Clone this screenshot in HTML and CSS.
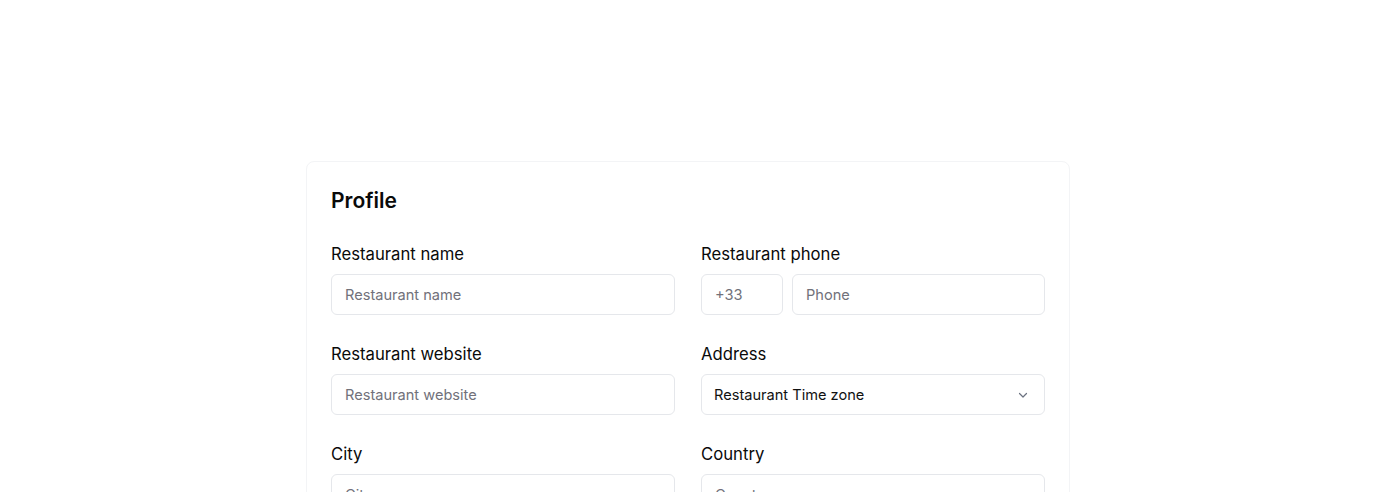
FILE: index.html
```html
<!DOCTYPE html>
<html lang="en">
<head>
<meta charset="utf-8">
<title>Profile</title>
<link rel="stylesheet" href="styles.css">
</head>
<body>
<main class="page">
  <section class="card">
    <h2 class="card-title">Profile</h2>
    <div class="form-grid">
      <div class="field">
        <label class="label">Restaurant name</label>
        <input class="input" type="text" placeholder="Restaurant name">
      </div>
      <div class="field">
        <label class="label">Restaurant phone</label>
        <div class="phone-row">
          <input class="input prefix" type="text" placeholder="+33">
          <input class="input grow" type="text" placeholder="Phone">
        </div>
      </div>
      <div class="field">
        <label class="label">Restaurant website</label>
        <input class="input" type="text" placeholder="Restaurant website">
      </div>
      <div class="field">
        <label class="label">Address</label>
        <div class="select">
          <span class="select-value">Restaurant Time zone</span>
          <svg class="chevron" width="12" height="12" viewBox="0 0 12 12" fill="none"><path d="M2.5 4.5 6 8l3.5-3.5" stroke="#6b7280" stroke-width="1.2" stroke-linecap="round" stroke-linejoin="round"/></svg>
        </div>
      </div>
      <div class="field">
        <label class="label">City</label>
        <input class="input" type="text" placeholder="City">
      </div>
      <div class="field">
        <label class="label">Country</label>
        <input class="input" type="text" placeholder="Country">
      </div>
    </div>
  </section>
</main>
</body>
</html>
```

FILE: styles.css
```css
* { box-sizing: border-box; }
html, body { margin: 0; padding: 0; background: #ffffff; }
body {
  font-family: Inter, "Noto Sans", "Liberation Sans", sans-serif;
  color: #111111;
}
.page {
  display: flex;
  justify-content: center;
  padding-top: 161px;
}
.card {
  width: 764px;
  border: 1px solid #f3f4f6;
  border-radius: 8px;
  padding: 24px;
  background: #fff;
}
.card-title {
  margin: 0;
  font-size: 21px;
  line-height: 28px;
  font-weight: 600;
  color: #0a0a0a;
  position: relative;
  top: 1px;
}
.form-grid {
  margin-top: 27px;
  display: grid;
  grid-template-columns: 1fr 1fr;
  column-gap: 26px;
  row-gap: 26px;
}
.field { display: flex; flex-direction: column; }
.label {
  font-size: 16.7px;
  line-height: 24px;
  font-weight: 400;
  color: #0a0a0a;
  padding-top: 1px;
  margin-bottom: 8px;
}
.input {
  height: 41px;
  width: 100%;
  border: 1px solid #e5e7eb;
  border-radius: 6px;
  padding: 1px 13px 0;
  font-family: inherit;
  font-size: 14.6px;
  color: #111;
  background: #fff;
  outline: none;
}
.input::placeholder { color: #71717a; }
.phone-row { display: flex; gap: 9px; }
.prefix { width: 82px; flex: 0 0 82px; }
.grow { flex: 1 1 auto; min-width: 0; }
.select {
  height: 41px;
  border: 1px solid #e5e7eb;
  border-radius: 6px;
  padding: 0 15px 0 12px;
  display: flex;
  align-items: center;
  justify-content: space-between;
  font-size: 14.6px;
  color: #111;
}
.chevron { display: block; }
```
